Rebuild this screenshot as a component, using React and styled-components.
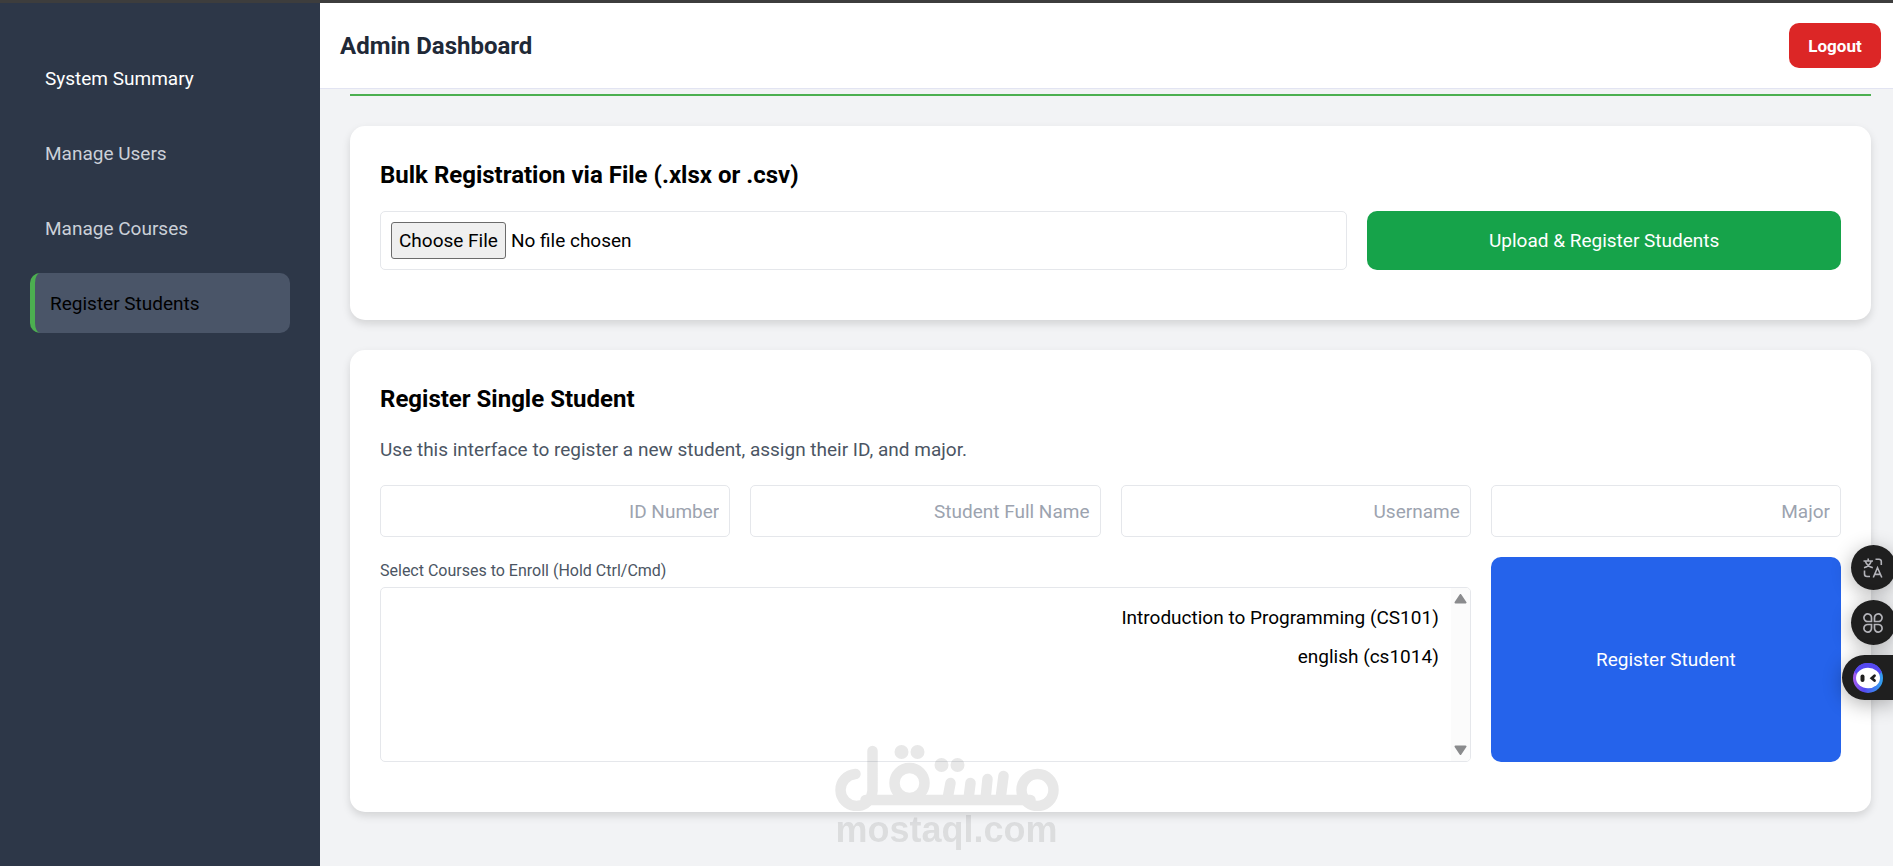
import React from "react";
import styled, { createGlobalStyle, css } from "styled-components";

const GlobalStyle = createGlobalStyle`
  *, *::before, *::after { box-sizing: border-box; }
  body {
    margin: 0;
    background: #f2f3f5;
    color: #000;
    font-family: Roboto, "Liberation Sans", sans-serif;
    font-size: 19px;
    line-height: 30px;
  }
  button, input, select { font: inherit; }
`;

const Page = styled.div`
  display: flex;
  min-height: 100vh;
  border-top: 3px solid #3d3d3d;
  overflow: hidden;
`;

const Sidebar = styled.nav`
  display: flex;
  flex-direction: column;
  flex: 0 0 320px;
  gap: 15px;
  padding: 45px 30px;
  background: #2d3748;
`;

const tones = { bright: "#fff", muted: "#cbd0d8", active: "#000" };

const NavLink = styled.a`
  padding: 16px 15px 14px;
  border-radius: 10px;
  color: ${(p) => tones[p.$tone]};
  text-decoration: none;
  ${(p) =>
    p.$tone === "active" &&
    css`
      border-left: 5px solid #4caf50;
      background: #4a5568;
    `}
`;

const Column = styled.div`
  flex: 1;
  min-width: 0;
`;

const Header = styled.header`
  display: flex;
  align-items: center;
  justify-content: space-between;
  padding: 20px 12px 20px 20px;
  border-bottom: 1px solid #e2e4f2;
  background: #fff;
`;

const PageTitle = styled.h1`
  margin: 0;
  color: #1f2937;
  font-size: 24px;
  font-weight: 700;
`;

const buttonColors = { danger: "#dc2626", success: "#16a34a", primary: "#2563eb" };

const Button = styled.button`
  border: 0;
  border-radius: 10px;
  background: ${(p) => buttonColors[p.$kind]};
  color: #fff;
  cursor: pointer;
`;

const LogoutButton = styled(Button)`
  width: 92px;
  height: 45px;
  font-size: 17px;
  font-weight: 700;
`;

const Main = styled.main`
  display: flex;
  flex-direction: column;
  gap: 30px;
  padding: 5px 22px 30px 30px;
`;

const Divider = styled.hr`
  width: 100%;
  height: 2px;
  margin: 0;
  border: 0;
  background: #4caf50;
`;

const Card = styled.section`
  padding: 30px 30px 50px;
  border-radius: 15px;
  background: #fff;
  box-shadow: 0 4px 8px rgba(0, 0, 0, 0.13);
`;

const CardTitle = styled.h2`
  margin: 0 0 17px;
  font-size: 24px;
  font-weight: 700;
  line-height: 38px;
`;

const Description = styled.p`
  margin: 0 0 20px;
  color: #4b5563;
`;

const FormGrid = styled.form`
  display: grid;
  grid-template-columns: repeat(${(p) => p.$columns}, minmax(0, 1fr));
  gap: 20px;
`;

const fieldBox = css`
  width: 100%;
  border: 1px solid #e5e7eb;
  border-radius: 5px;
  background: #fff;
  color: #000;
`;

const FileInput = styled.input`
  ${fieldBox}
  grid-column: span 2;
  height: 59px;
  padding: 10px;

  &::file-selector-button {
    height: 37px;
    margin: 0 5px 0 0;
    padding: 0 7px;
    border: 1px solid #6b6b6b;
    border-radius: 3px;
    background: #efefef;
    color: #000;
    font: inherit;
  }
`;

const TextInput = styled.input`
  ${fieldBox}
  height: 52px;
  padding: 10px;
  text-align: right;

  &::placeholder {
    color: #9ca3af;
    opacity: 1;
  }
`;

const CourseField = styled.div`
  grid-column: span 3;
`;

const CourseLabel = styled.label`
  display: block;
  margin-bottom: 3px;
  color: #4b5563;
  font-size: 16px;
  line-height: 27px;
`;

const CourseBox = styled.div`
  ${fieldBox}
  display: flex;
  height: 175px;
  overflow: hidden;
`;

const CourseSelect = styled.select`
  flex: 1;
  min-width: 0;
  padding: 10px;
  border: 0;
  background: transparent;
  color: #000;
  overflow: hidden;
  text-align: right;

  option {
    padding: 8px 2px;
  }
`;

const ScrollTrack = styled.div`
  display: flex;
  flex: 0 0 19px;
  flex-direction: column;
  align-items: center;
  justify-content: space-between;
  padding: 6px 0;
  background: #fbfbfb;
`;

const FloatingTools = styled.div`
  position: fixed;
  top: 545px;
  right: -3px;
  display: flex;
  flex-direction: column;
  align-items: flex-end;
  gap: 10px;
`;

const ToolButton = styled.button`
  display: flex;
  align-items: center;
  width: ${(p) => (p.$wide ? "54px" : "45px")};
  height: 45px;
  padding: 0 0 0 ${(p) => (p.$wide ? "11px" : "12px")};
  border: 0;
  border-radius: ${(p) => (p.$wide ? "23px 0 0 23px" : "23px")};
  background: #1f1f1f;
  box-shadow: 0 4px 20px rgba(0, 0, 0, 0.3);
  cursor: pointer;

  svg { flex: none; }
`;

const Watermark = styled.div`
  position: fixed;
  bottom: 17px;
  left: 50%;
  display: flex;
  flex-direction: column;
  align-items: center;
  color: #000;
  opacity: 0.09;
  pointer-events: none;
  transform: translateX(-50%);
`;

const WatermarkText = styled.span`
  font-family: "Liberation Sans", sans-serif;
  font-size: 36px;
  font-weight: 700;
  line-height: 38px;
`;

const navItems = [
  { label: "System Summary", tone: "bright" },
  { label: "Manage Users", tone: "muted" },
  { label: "Manage Courses", tone: "muted" },
  { label: "Register Students", tone: "active" },
];

const studentFields = ["ID Number", "Student Full Name", "Username", "Major"];

const courses = ["Introduction to Programming (CS101)", "english (cs1014)"];

function ScrollArrow({ down }) {
  return (
    <svg width="13" height="10" viewBox="0 0 13 10" fill="#8a8b8d" stroke="#8a8b8d" strokeWidth="2" strokeLinejoin="round">
      <path d={down ? "M6.5 9L11.5 1.5H1.5Z" : "M6.5 1L11.5 8.5H1.5Z"} />
    </svg>
  );
}

function TranslateIcon() {
  return (
    <svg width="20" height="20" viewBox="0 0 20 20" fill="none" stroke="#b4b4ba" strokeWidth="1.6" aria-hidden="true">
      <path d="M0.5 3H10M5.2 0.5V3M8.3 3C7.3 6.2 4.5 8.7 1 9.8M2.2 3C3.4 6.3 6 8.7 9.8 9.8" />
      <path d="M12.5 1.2H16A2.3 2.3 0 0 1 18.3 3.5V7" />
      <path d="M1.5 12.5V16A2.5 2.5 0 0 0 4 18.5H7" />
      <path d="M10.3 19.5L14.5 9.8L18.8 19.5M11.8 16.4H17.2" />
    </svg>
  );
}

function AppsIcon() {
  return (
    <svg width="20" height="20" viewBox="0 0 20 20" fill="none" stroke="#b4b4ba" strokeWidth="1.7" aria-hidden="true">
      <path d="M8.5 8.5H5A3.8 3.8 0 1 1 8.5 5Z" />
      <path d="M11.5 8.5V5A3.8 3.8 0 1 1 15 8.5Z" />
      <path d="M8.5 11.5V15A3.8 3.8 0 1 1 5 11.5Z" />
      <path d="M11.5 11.5H15A3.8 3.8 0 1 1 11.5 15Z" />
    </svg>
  );
}

function RobotIcon() {
  return (
    <svg width="30" height="30" viewBox="0 0 30 30" aria-hidden="true">
      <defs>
        <linearGradient id="ring" x1="0" y1="0.6" x2="1" y2="0.75">
          <stop offset="0" stopColor="#a45cf0" />
          <stop offset="0.4" stopColor="#5548f0" />
          <stop offset="1" stopColor="#2fa8f0" />
        </linearGradient>
      </defs>
      <circle cx="15" cy="15" r="15" fill="url(#ring)" />
      <path d="M1.2 9A15 15 0 0 1 28.8 9L24 13L6 12Z" fill="#5548f0" />
      <ellipse cx="15" cy="15" rx="12" ry="10.3" fill="#fff" />
      <rect x="7.5" y="11.5" width="4" height="7.5" rx="2" fill="#1f1f1f" />
      <path d="M21.5 12.8L18.8 15.2L21.5 17.5" fill="none" stroke="#1f1f1f" strokeWidth="2.8" strokeLinecap="round" />
    </svg>
  );
}

function WatermarkLogo() {
  return (
    <svg width="225" height="66" viewBox="0 0 225 66" fill="none" stroke="currentColor" strokeWidth="10.5" strokeLinecap="round" aria-hidden="true">
      <path d="M21 29A16 16 0 1 0 38 46V6M31 55H196" />
      <circle cx="75" cy="38" r="15" />
      <circle cx="203" cy="45" r="16" />
      <path d="M116 38L113 54M136 38L134 54M153 34L151 54M169 31L166 54" />
      <g fill="currentColor" stroke="none">
        <circle cx="67" cy="7" r="7" />
        <circle cx="83" cy="7" r="7" />
        <circle cx="107" cy="20" r="7" />
        <circle cx="123" cy="20" r="7" />
      </g>
    </svg>
  );
}

export default function App() {
  const stay = (event) => event.preventDefault();
  return (
    <>
      <GlobalStyle />
      <Page>
        <Sidebar aria-label="Admin">
          {navItems.map((item) => (
            <NavLink key={item.label} href="#" $tone={item.tone} aria-current={item.tone === "active" ? "page" : undefined}>
              {item.label}
            </NavLink>
          ))}
        </Sidebar>
        <Column>
          <Header>
            <PageTitle>Admin Dashboard</PageTitle>
            <LogoutButton type="button" $kind="danger">Logout</LogoutButton>
          </Header>
          <Main>
            <Divider />
            <Card>
              <CardTitle>Bulk Registration via File (.xlsx or .csv)</CardTitle>
              <FormGrid $columns={3} onSubmit={stay}>
                <FileInput type="file" accept=".xlsx,.csv" aria-label="Student file" />
                <Button type="submit" $kind="success">Upload &amp; Register Students</Button>
              </FormGrid>
            </Card>
            <Card>
              <CardTitle>Register Single Student</CardTitle>
              <Description>Use this interface to register a new student, assign their ID, and major.</Description>
              <FormGrid $columns={4} onSubmit={stay}>
                {studentFields.map((name) => (
                  <TextInput key={name} type="text" placeholder={name} aria-label={name} />
                ))}
                <CourseField>
                  <CourseLabel htmlFor="courses">Select Courses to Enroll (Hold Ctrl/Cmd)</CourseLabel>
                  <CourseBox>
                    <CourseSelect id="courses" multiple>
                      {courses.map((course) => (
                        <option key={course}>{course}</option>
                      ))}
                    </CourseSelect>
                    <ScrollTrack aria-hidden="true">
                      <ScrollArrow />
                      <ScrollArrow down />
                    </ScrollTrack>
                  </CourseBox>
                </CourseField>
                <Button type="submit" $kind="primary">Register Student</Button>
              </FormGrid>
            </Card>
          </Main>
        </Column>
      </Page>
      <Watermark>
        <WatermarkLogo />
        <WatermarkText>mostaql.com</WatermarkText>
      </Watermark>
      <FloatingTools>
        <ToolButton type="button" aria-label="Translate"><TranslateIcon /></ToolButton>
        <ToolButton type="button" aria-label="Apps"><AppsIcon /></ToolButton>
        <ToolButton type="button" aria-label="Assistant" $wide><RobotIcon /></ToolButton>
      </FloatingTools>
    </>
  );
}
